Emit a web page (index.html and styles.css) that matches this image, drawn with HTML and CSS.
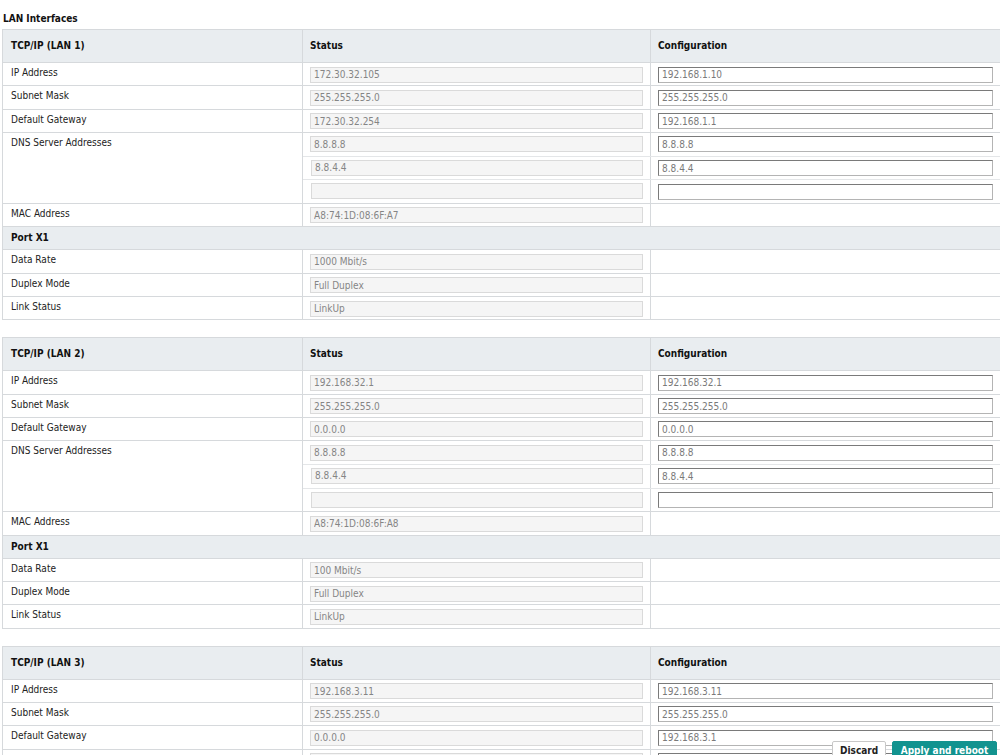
FILE: index.html
```html
<!DOCTYPE html>
<html>
<head>
<meta charset="utf-8">
<link rel="stylesheet" href="styles.css">
</head>
<body>
<div class="page">
  <h1 class="title">LAN Interfaces</h1>

  <table class="lan">
    <colgroup><col class="c1"><col class="c2"><col class="c3"></colgroup>
    <tr class="head"><th>TCP/IP (LAN 1)</th><th>Status</th><th>Configuration</th></tr>
    <tr><td>IP Address</td><td><input class="ro" value="172.30.32.105" readonly></td><td><input class="rw" value="192.168.1.10"></td></tr>
    <tr><td>Subnet Mask</td><td><input class="ro" value="255.255.255.0" readonly></td><td><input class="rw" value="255.255.255.0"></td></tr>
    <tr><td>Default Gateway</td><td><input class="ro" value="172.30.32.254" readonly></td><td><input class="rw" value="192.168.1.1"></td></tr>
    <tr class="dnsrow"><td rowspan="3">DNS Server Addresses</td><td class="dns"><input class="ro" value="8.8.8.8" readonly></td><td class="dns"><input class="rw" value="8.8.8.8"></td></tr>
    <tr class="dnsrow"><td class="dns"><input class="ro" value="8.8.4.4" readonly></td><td class="dns"><input class="rw" value="8.8.4.4"></td></tr>
    <tr class="dnsrow"><td><input class="ro" value="" readonly></td><td><input class="rw" value=""></td></tr>
    <tr><td>MAC Address</td><td><input class="ro" value="A8:74:1D:08:6F:A7" readonly></td><td></td></tr>
    <tr class="sub"><th colspan="3">Port X1</th></tr>
    <tr><td>Data Rate</td><td><input class="ro" value="1000 Mbit/s" readonly></td><td></td></tr>
    <tr><td>Duplex Mode</td><td><input class="ro" value="Full Duplex" readonly></td><td></td></tr>
    <tr><td>Link Status</td><td><input class="ro" value="LinkUp" readonly></td><td></td></tr>
  </table>

  <table class="lan">
    <colgroup><col class="c1"><col class="c2"><col class="c3"></colgroup>
    <tr class="head"><th>TCP/IP (LAN 2)</th><th>Status</th><th>Configuration</th></tr>
    <tr><td>IP Address</td><td><input class="ro" value="192.168.32.1" readonly></td><td><input class="rw" value="192.168.32.1"></td></tr>
    <tr><td>Subnet Mask</td><td><input class="ro" value="255.255.255.0" readonly></td><td><input class="rw" value="255.255.255.0"></td></tr>
    <tr><td>Default Gateway</td><td><input class="ro" value="0.0.0.0" readonly></td><td><input class="rw" value="0.0.0.0"></td></tr>
    <tr class="dnsrow"><td rowspan="3">DNS Server Addresses</td><td class="dns"><input class="ro" value="8.8.8.8" readonly></td><td class="dns"><input class="rw" value="8.8.8.8"></td></tr>
    <tr class="dnsrow"><td class="dns"><input class="ro" value="8.8.4.4" readonly></td><td class="dns"><input class="rw" value="8.8.4.4"></td></tr>
    <tr class="dnsrow"><td><input class="ro" value="" readonly></td><td><input class="rw" value=""></td></tr>
    <tr><td>MAC Address</td><td><input class="ro" value="A8:74:1D:08:6F:A8" readonly></td><td></td></tr>
    <tr class="sub"><th colspan="3">Port X1</th></tr>
    <tr><td>Data Rate</td><td><input class="ro" value="100 Mbit/s" readonly></td><td></td></tr>
    <tr><td>Duplex Mode</td><td><input class="ro" value="Full Duplex" readonly></td><td></td></tr>
    <tr><td>Link Status</td><td><input class="ro" value="LinkUp" readonly></td><td></td></tr>
  </table>

  <table class="lan">
    <colgroup><col class="c1"><col class="c2"><col class="c3"></colgroup>
    <tr class="head"><th>TCP/IP (LAN 3)</th><th>Status</th><th>Configuration</th></tr>
    <tr><td>IP Address</td><td><input class="ro" value="192.168.3.11" readonly></td><td><input class="rw" value="192.168.3.11"></td></tr>
    <tr><td>Subnet Mask</td><td><input class="ro" value="255.255.255.0" readonly></td><td><input class="rw" value="255.255.255.0"></td></tr>
    <tr><td>Default Gateway</td><td><input class="ro" value="0.0.0.0" readonly></td><td><input class="rw" value="192.168.3.1"></td></tr>
    <tr class="dnsrow"><td rowspan="3">DNS Server Addresses</td><td class="dns"><input class="ro" value="8.8.8.8" readonly></td><td class="dns"><input class="rw" value="8.8.8.8"></td></tr>
    <tr class="dnsrow"><td class="dns"><input class="ro" value="8.8.4.4" readonly></td><td class="dns"><input class="rw" value="8.8.4.4"></td></tr>
    <tr class="dnsrow"><td><input class="ro" value="" readonly></td><td><input class="rw" value=""></td></tr>
  </table>
</div>

<div class="actions">
  <button class="btn discard">Discard</button>
  <button class="btn apply">Apply and reboot</button>
</div>
</body>
</html>
```

FILE: styles.css
```css
html, body {
  margin: 0;
  padding: 0;
  background: #ffffff;
}

body {
  font-family: "DejaVu Sans Condensed", "DejaVu Sans", Verdana, sans-serif;
  font-size: 10px;
  color: #222222;
}

.page {
  padding: 13px 0 0 2px;
  width: 998px;
}

.title {
  font-size: 10px;
  font-weight: bold;
  margin: 0 0 5px 1px;
  line-height: 11px;
  color: #111111;
}

.lan {
  width: 998px;
  border-collapse: collapse;
  table-layout: fixed;
  margin-bottom: 17px;
  border: 1px solid #d6d9dc;
}

.c1 { width: 300px; }
.c2 { width: 348px; }
.c3 { width: 350px; }

.lan tr {
  height: 23.3px;
}

.lan tr.dnsrow {
  height: 23.67px;
}

.lan th,
.lan td {
  border: 1px solid #d6d9dc;
  text-align: left;
  vertical-align: top;
  padding: 3.5px 7px 0 7px;
  line-height: 14px;
}

.lan td:first-child,
.lan th:first-child {
  padding-left: 8px;
}

.lan td:first-child {
  padding-top: 3px;
}

.lan tr.head {
  height: 33px;
}

.lan tr.head th {
  background: #e9edf0;
  font-weight: bold;
  padding-top: 0;
  padding-bottom: 0;
  vertical-align: middle;
  color: #111111;
}

.lan tr.sub th {
  background: #e9edf0;
  font-weight: bold;
  padding-top: 4px;
  color: #111111;
}

.lan td.dns {
  border-bottom-color: #e4e6e8;
}

input {
  display: block;
  box-sizing: border-box;
  width: 100%;
  height: 16px;
  margin: 0;
  padding: 0 3px;
  font-family: "DejaVu Sans Condensed", "DejaVu Sans", Verdana, sans-serif;
  font-size: 10px;
  color: #858585;
  outline: none;
}

input.ro {
  background: #f5f5f5;
  border: 1px solid #dadada;
}

input.rw {
  background: #ffffff;
  border: 1px solid #8c8c8c;
  border-top-color: #7a7a7a;
  border-left-color: #7a7a7a;
  border-bottom-color: #b4b4b4;
  border-right-color: #b4b4b4;
  color: #7a7a7a;
}

.actions {
  position: fixed;
  right: 3px;
  bottom: -6px;
  display: flex;
  gap: 6px;
}

.btn {
  font-family: "DejaVu Sans Condensed", "DejaVu Sans", Verdana, sans-serif;
  font-size: 10px;
  font-weight: bold;
  height: 20px;
  padding: 0 7px 0 7px;
  line-height: 14px;
  display: block;
  border-radius: 2px 2px 0 0;
}

.btn.discard {
  background: #ffffff;
  color: #222222;
  border: 1px solid #c8c8c8;
  width: 54px;
}

.btn.apply {
  background: #12938f;
  color: #ffffff;
  border: 1px solid #12938f;
  width: 105px;
}
```
